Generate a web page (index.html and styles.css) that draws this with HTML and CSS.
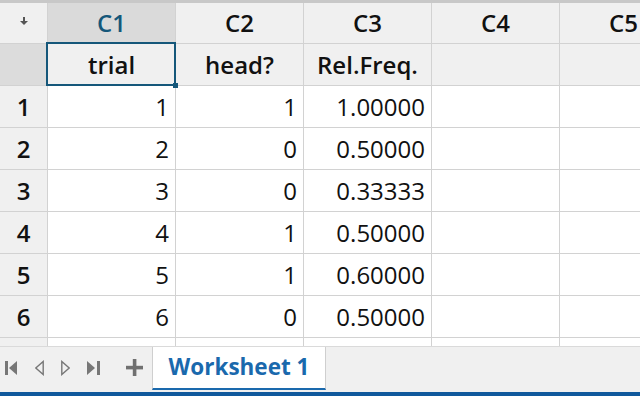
FILE: index.html
```html
<!DOCTYPE html>
<html lang="en">
<head>
  <meta charset="UTF-8" />
  <meta name="viewport" content="width=device-width, initial-scale=1.0"/>
  <title>Worksheet 1</title>
  <link rel="stylesheet" href="styles.css">
</head>
<body>

<div class="app">
  <div class="topline"></div>

  <div class="sheet">
    <div class="grid">
      <!-- column headers -->
      <div class="corner">
        <svg width="8" height="9" viewBox="0 0 8 9"><rect x="3" y="0" width="2" height="4" fill="#555"/><polygon points="0,4 8,4 4,8" fill="#555"/></svg>
      </div>
      <div class="colhead active">C1</div>
      <div class="colhead">C2</div>
      <div class="colhead">C3</div>
      <div class="colhead">C4</div>
      <div class="colhead">C5</div>

      <!-- names -->
      <div class="rowhead namehead"></div>
      <div class="name selected">trial</div>
      <div class="name">head?</div>
      <div class="name">Rel.Freq.</div>
      <div class="name"></div>
      <div class="name"></div>

      <div class="rowhead">1</div>
      <div class="cell">1</div><div class="cell">1</div><div class="cell">1.00000</div><div class="cell"></div><div class="cell"></div>

      <div class="rowhead">2</div>
      <div class="cell">2</div><div class="cell">0</div><div class="cell">0.50000</div><div class="cell"></div><div class="cell"></div>

      <div class="rowhead">3</div>
      <div class="cell">3</div><div class="cell">0</div><div class="cell">0.33333</div><div class="cell"></div><div class="cell"></div>

      <div class="rowhead">4</div>
      <div class="cell">4</div><div class="cell">1</div><div class="cell">0.50000</div><div class="cell"></div><div class="cell"></div>

      <div class="rowhead">5</div>
      <div class="cell">5</div><div class="cell">1</div><div class="cell">0.60000</div><div class="cell"></div><div class="cell"></div>

      <div class="rowhead">6</div>
      <div class="cell">6</div><div class="cell">0</div><div class="cell">0.50000</div><div class="cell"></div><div class="cell"></div>

      <div class="rowhead"></div>
      <div class="cell"></div><div class="cell"></div><div class="cell"></div><div class="cell"></div><div class="cell"></div>
    </div>
  </div>

  <div class="tabbar">
    <div class="nav">
      <svg class="first" width="12" height="16" viewBox="0 0 12 16"><rect x="0" y="1" width="3" height="14" fill="#777"/><polygon points="12,1 12,15 4,8" fill="#777"/></svg>
      <svg class="prev" width="9" height="16" viewBox="0 0 9 16"><polygon points="8.2,1.5 8.2,14.5 0.8,8" fill="none" stroke="#777" stroke-width="1.4"/></svg>
      <svg class="next" width="9" height="16" viewBox="0 0 9 16"><polygon points="0.8,1.5 0.8,14.5 8.2,8" fill="none" stroke="#777" stroke-width="1.4"/></svg>
      <svg class="last" width="13" height="16" viewBox="0 0 13 16"><polygon points="0,1 0,15 8,8" fill="#777"/><rect x="10" y="1" width="3" height="14" fill="#777"/></svg>
      <svg class="plus" width="17" height="17" viewBox="0 0 17 17"><rect x="6.8" y="0" width="3.6" height="17" fill="#707070"/><rect x="0" y="6.8" width="17" height="3.6" fill="#707070"/></svg>
    </div>
    <div class="tab">Worksheet 1</div>
  </div>

  <div class="bottombar"></div>
</div>

</body>
</html>
```

FILE: styles.css
```css
html, body {
  margin: 0;
  padding: 0;
  overflow: hidden;
}

body {
  font-family: 'Open Sans', 'Noto Sans', sans-serif;
  background: #ffffff;
  color: #111;
}

.app {
  width: 640px;
  height: 396px;
  display: flex;
  flex-direction: column;
  overflow: hidden;
}

.topline {
  height: 3px;
  background: #c8c8c8;
  flex: none;
}

.sheet {
  flex: 1;
  overflow: hidden;
  background: #ffffff;
}

.grid {
  display: grid;
  grid-template-columns: 47px repeat(5, 127px);
  grid-template-rows: 40px repeat(8, 41px);
  gap: 1px;
  background: #d2d2d2;
  width: 688px;
}

.grid > div {
  display: flex;
  align-items: center;
  font-size: 24px;
  line-height: 1;
}

.corner {
  background: #f0f0f0;
  justify-content: center;
  padding-bottom: 3px;
}

.colhead {
  background: #f0f0f0;
  justify-content: center;
  font-weight: 600;
  color: #111;
}

.colhead.active {
  background: #dadada;
  color: #15577a;
}

.rowhead {
  background: #f0f0f0;
  justify-content: center;
  font-weight: 600;
}

.namehead {
  background: #dcdcdc;
}

.name {
  background: #f0f0f0;
  justify-content: center;
  font-weight: 600;
}

.name.selected {
  position: relative;
}

.name.selected::before {
  content: "";
  position: absolute;
  left: -2px;
  top: -2px;
  right: -1px;
  bottom: -1px;
  border: 2px solid #15577a;
}

.name.selected::after {
  content: "";
  position: absolute;
  right: -3px;
  bottom: -3px;
  width: 5px;
  height: 5px;
  background: #15577a;
}

.cell {
  background: #ffffff;
  justify-content: flex-end;
  padding-right: 6px;
}

.tabbar {
  flex: none;
  height: 45px;
  border-top: 1px solid #dadada;
  background: #f0f0f0;
  display: flex;
  align-items: stretch;
}

.nav {
  width: 152px;
  flex: none;
  display: flex;
  align-items: center;
  padding-bottom: 4px;
  box-sizing: border-box;
}

.nav .first { margin-left: 5px; }
.nav .prev { margin-left: 18px; }
.nav .next { margin-left: 17px; }
.nav .last { margin-left: 17px; }
.nav .plus { margin-left: 26px; }

.tab {
  width: 174px;
  height: 43px;
  box-sizing: border-box;
  background: #ffffff;
  border-left: 1px solid #cfcfcf;
  border-right: 1px solid #cfcfcf;
  border-bottom: 2px solid #1a69ad;
  display: flex;
  align-items: center;
  justify-content: center;
  font-size: 22.5px;
  font-weight: 700;
  color: #1a69ad;
  padding-bottom: 2px;
}

.bottombar {
  flex: none;
  height: 4px;
  background: #10599c;
}
```
